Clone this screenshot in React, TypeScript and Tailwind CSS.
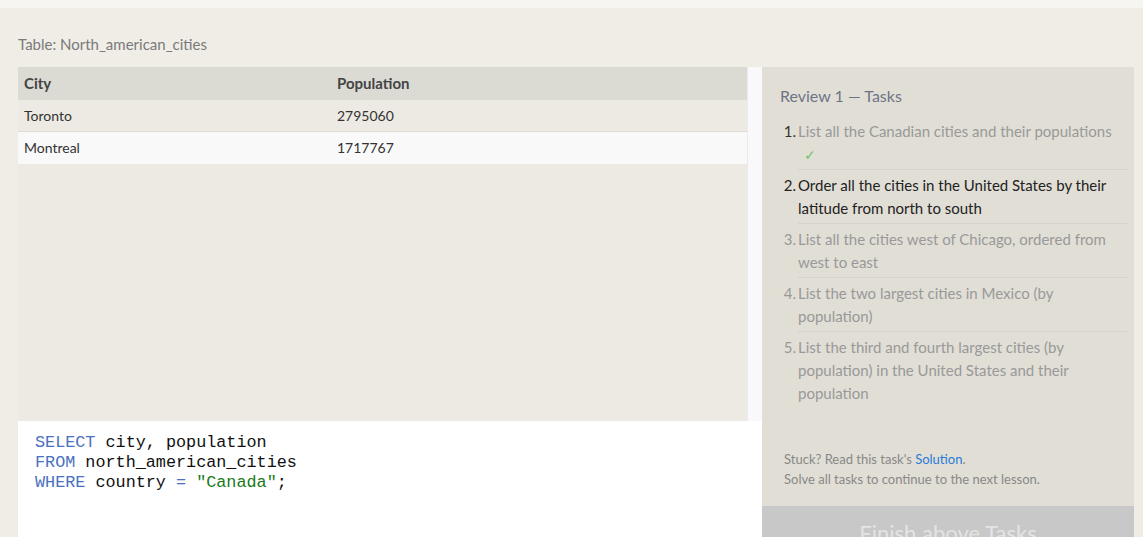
import React from "react";

const tasks = [
  { n: "1.", text: "List all the Canadian cities and their populations", state: "done" },
  { n: "2.", text: "Order all the cities in the United States by their latitude from north to south", state: "active" },
  { n: "3.", text: "List all the cities west of Chicago, ordered from west to east", state: "todo" },
  { n: "4.", text: "List the two largest cities in Mexico (by population)", state: "todo" },
  { n: "5.", text: "List the third and fourth largest cities (by population) in the United States and their population", state: "todo" },
];

export default function App() {
  return (
    <div className="w-[1143px] h-[537px] overflow-hidden bg-[#efede6] flex flex-col" style={{ fontFamily: "Lato, 'Open Sans', sans-serif" }}>
      <div className="h-[8px] bg-[#f6f5f1] shrink-0" />
      <div className="flex-1 flex flex-col pl-[18px] pr-[9px]">
        <div className="h-[59px] flex items-center pt-[14px] text-[15px] text-[#7a7a7a]">Table: North_american_cities</div>
        <div className="flex flex-1 min-h-0">
          <div className="w-[744px] flex flex-col">
            <div className="flex h-[354px]">
              <div className="w-[729px] bg-[#eceae2] flex flex-col">
                <div className="flex h-[33px] bg-[#dcdbd3] items-center text-[15px] font-bold text-[#444]">
                  <div className="w-[319px] pl-[6px]">City</div>
                  <div>Population</div>
                </div>
                <div className="flex h-[32px] items-center pb-[1px] text-[14px] text-[#333] border-b border-[#dddcd6]">
                  <div className="w-[319px] pl-[6px]">Toronto</div>
                  <div>2795060</div>
                </div>
                <div className="flex h-[32px] items-center pb-[1px] text-[14px] text-[#333] bg-[#f9f9f9]">
                  <div className="w-[319px] pl-[6px]">Montreal</div>
                  <div>1717767</div>
                </div>
              </div>
              <div className="w-[15px] bg-[#f9f9fb] border-l border-[#ecebe6]" />
            </div>
            <div className="flex-1 bg-white pt-[12px] pl-[17px] text-[16.8px] leading-[20px] text-[#111]" style={{ fontFamily: "'Liberation Mono', monospace" }}>
              <div><span className="text-[#4a70c0]">SELECT</span> city, population</div>
              <div><span className="text-[#4a70c0]">FROM</span> north_american_cities</div>
              <div><span className="text-[#4a70c0]">WHERE</span> country <span className="text-[#4a70c0]">=</span> <span className="text-[#1a7a1a]">"Canada"</span>;</div>
            </div>
          </div>
          <div className="w-[372px] bg-[#e1ded6] flex flex-col">
            <div className="flex-1 flex flex-col pl-[18px] pr-[7px]">
              <div className="pt-[18px] text-[16px] text-[#6d7487] leading-[22px]">Review 1 — Tasks</div>
              <div className="mt-[9px] flex flex-col">
                {tasks.map((t, i) => (
                  <div key={i} className="flex text-[15px] leading-[23px]">
                    <div className={"w-[18px] shrink-0 text-right pr-[2px] pt-[4px] " + (t.state === "done" ? "text-[#333]" : t.state === "active" ? "text-[#222]" : "text-[#999]")}>{t.n}</div>
                    <div className={"flex-1 pt-[4px] pb-[3px] " + (i < tasks.length - 1 ? "border-b border-[#d6d3cb] " : "") + (t.state === "active" ? "text-[#222]" : "text-[#999]")}>
                      <div className="pr-[8px]">{t.text}</div>
                      {t.state === "done" && <div className="pl-[6px] text-[#6cc46c] text-[14px]">✓</div>}
                    </div>
                  </div>
                ))}
              </div>
              <div className="mt-auto pb-[17px] pl-[4px] text-[13px] leading-[20px] text-[#888]">
                <div>Stuck? Read this task's <span className="text-[#2a7ad8]">Solution</span>.</div>
                <div>Solve all tasks to continue to the next lesson.</div>
              </div>
            </div>
            <div className="h-[31px] bg-[#c8c8c8] flex justify-center overflow-hidden">
              <div className="text-[22px] text-[#e4e4e4] pt-[14px] leading-[26px]">Finish above Tasks</div>
            </div>
          </div>
        </div>
      </div>
    </div>
  );
}
